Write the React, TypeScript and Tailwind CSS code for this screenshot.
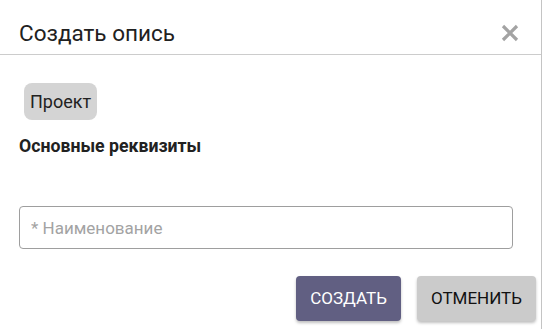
export default function App() {
  return (
    <div className="w-[546px] h-[329px] bg-white overflow-hidden font-['Roboto',sans-serif]">
      <div className="w-[542px] h-full border-r border-[#c4c4c4] flex flex-col">
        {/* Header */}
        <div className="h-[55px] flex items-center justify-between pt-[12px] pl-[19px] pr-[22px] border-b border-[#cccccc]">
          <h2 className="text-[22.5px] text-[#212121] leading-none">Создать опись</h2>
          <svg width="18" height="18" viewBox="0 0 18 18">
            <path d="M2 2 L16 16 M16 2 L2 16" stroke="#a3a3a3" strokeWidth="3.2" strokeLinecap="butt" />
          </svg>
        </div>

        {/* Body */}
        <div className="flex flex-col pl-[19px] pr-[28px]">
          <div className="mt-[28px] ml-[5px] self-start h-[37px] px-[6px] rounded-[8px] bg-[#d4d4d4] flex items-center text-[18px] text-[#222]">
            Проект
          </div>
          <div className="mt-[14px] text-[17.7px] font-bold text-[#212121] leading-[24px]">
            Основные реквизиты
          </div>
          <input
            className="mt-[48px] h-[43px] w-[494px] border border-[#9e9e9e] rounded-[4px] px-[11px] text-[17px] outline-none placeholder:text-[#a3a3a3]"
            placeholder="* Наименование"
          />
        </div>

        {/* Footer */}
        <div className="mt-[27px] flex justify-end gap-[16px] pr-[5px]">
          <button className="h-[45px] px-[14px] rounded-[4px] bg-[#615f82] text-white text-[17px] uppercase shadow-[0_2px_3px_rgba(0,0,0,0.25)]">
            Создать
          </button>
          <button className="h-[45px] px-[14px] rounded-[4px] bg-[#cbcbcb] text-[#111] text-[17px] uppercase shadow-[0_2px_3px_rgba(0,0,0,0.25)]">
            Отменить
          </button>
        </div>
      </div>
    </div>
  );
}
